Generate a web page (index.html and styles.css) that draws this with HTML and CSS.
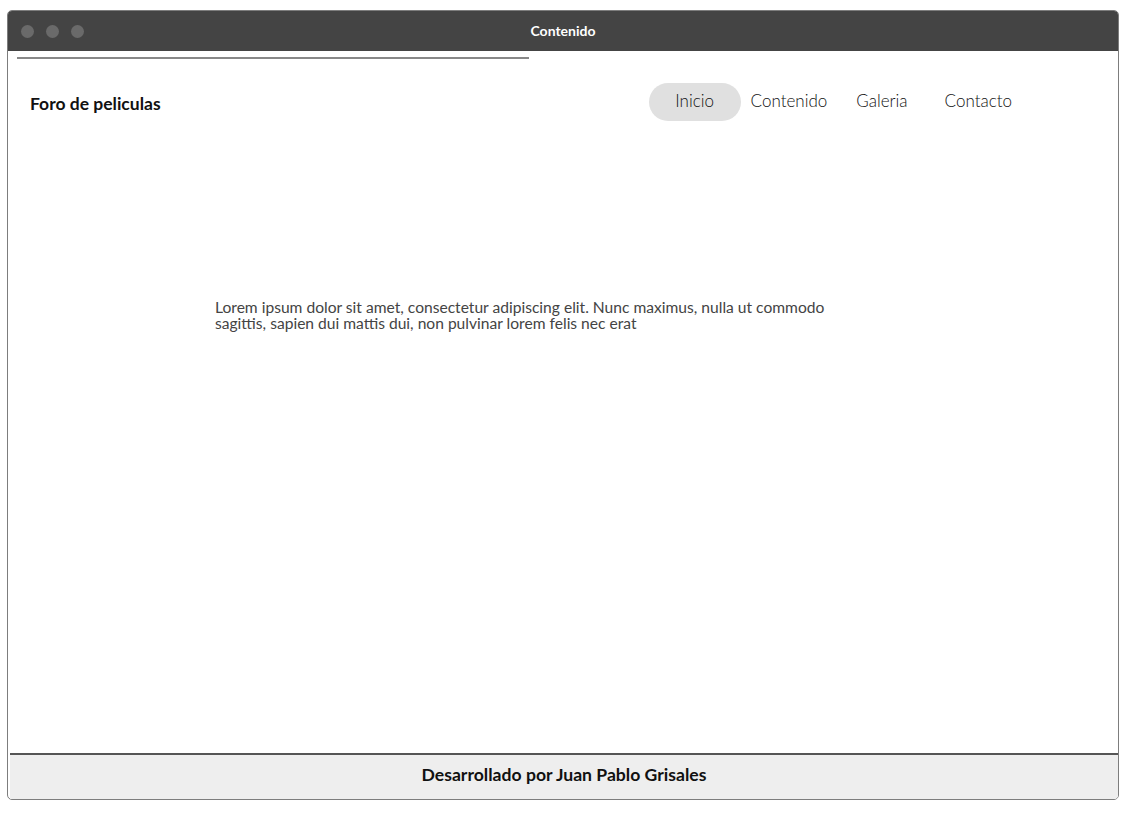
FILE: index.html
```html
<!DOCTYPE html>
<html lang="es">
<head>
<meta charset="utf-8">
<title>Contenido</title>
<link rel="stylesheet" href="styles.css">
</head>
<body>
<div class="window">
  <div class="titlebar">
    <div class="dots"><span class="dot"></span><span class="dot"></span><span class="dot"></span></div>
    <div class="title">Contenido</div>
  </div>
  <div class="content">
    <div class="progress"></div>
    <header class="header">
      <div class="brand">Foro de peliculas</div>
      <nav class="nav">
        <a class="nav-item active">Inicio</a>
        <a class="nav-item">Contenido</a>
        <a class="nav-item">Galeria</a>
        <a class="nav-item">Contacto</a>
      </nav>
    </header>
    <main class="main">
      <p class="lorem">Lorem ipsum dolor sit amet, consectetur adipiscing elit. Nunc maximus, nulla ut commodo<br>sagittis, sapien dui mattis dui, non pulvinar lorem felis nec erat</p>
    </main>
  </div>
  <footer class="footer">Desarrollado por Juan Pablo Grisales</footer>
</div>
</body>
</html>
```
FILE: styles.css
```css
html, body {
  margin: 0;
  padding: 0;
  background: #fff;
}
body {
  font-family: Lato, "Open Sans", sans-serif;
  color: #222;
}
.window {
  margin: 10px 0 0 7px;
  width: 1110px;
  height: 788px;
  border: 1px solid #7d7d7d;
  border-radius: 5px;
  display: flex;
  flex-direction: column;
  overflow: hidden;
}
.titlebar {
  height: 40px;
  background: #444;
  display: flex;
  align-items: center;
  position: relative;
}
.dots {
  display: flex;
  gap: 12px;
  padding-left: 13px;
}
.dot {
  width: 13px;
  height: 13px;
  border-radius: 50%;
  background: #6a6a6a;
}
.title {
  position: absolute;
  left: 0;
  right: 0;
  top: 11px;
  text-align: center;
  color: #fff;
  font-weight: 700;
  font-size: 14px;
}
.content {
  flex: 1;
  display: flex;
  flex-direction: column;
}
.progress {
  margin: 6px 0 0 9px;
  width: 512px;
  height: 2px;
  background: #888;
}
.header {
  display: flex;
  justify-content: space-between;
  align-items: center;
  padding: 0 0 0 22px;
  margin-top: 23px;
  height: 40px;
}
.brand {
  font-weight: 700;
  font-size: 17.5px;
  color: #111;
  margin-top: 2px;
}
.nav {
  display: flex;
  align-items: center;
  margin-right: 96px;
}
.nav-item {
  font-size: 17px;
  font-weight: 300;
  color: #111;
  height: 38px;
  line-height: 36px;
  padding: 0 10px;
}
.nav-item.active {
  background: #e0e0e0;
  border-radius: 19px;
  width: 92px;
  box-sizing: border-box;
  text-align: center;
}
.nav-item:nth-child(3) { margin-left: 9px; }
.nav-item:nth-child(4) { margin-left: 17px; }
.main {
  flex: 1;
  padding-left: 207px;
}
.lorem {
  margin: 177px 0 0 0;
  font-size: 15.6px;
  line-height: 16px;
  color: #444;
}
.footer {
  height: 44px;
  border-top: 2px solid #555;
  background: #eee;
  margin-left: 2px;
  padding-bottom: 6px;
  box-sizing: border-box;
  height: 46px;
  display: flex;
  align-items: center;
  justify-content: center;
  font-weight: 700;
  font-size: 17.6px;
  color: #111;
}
```
